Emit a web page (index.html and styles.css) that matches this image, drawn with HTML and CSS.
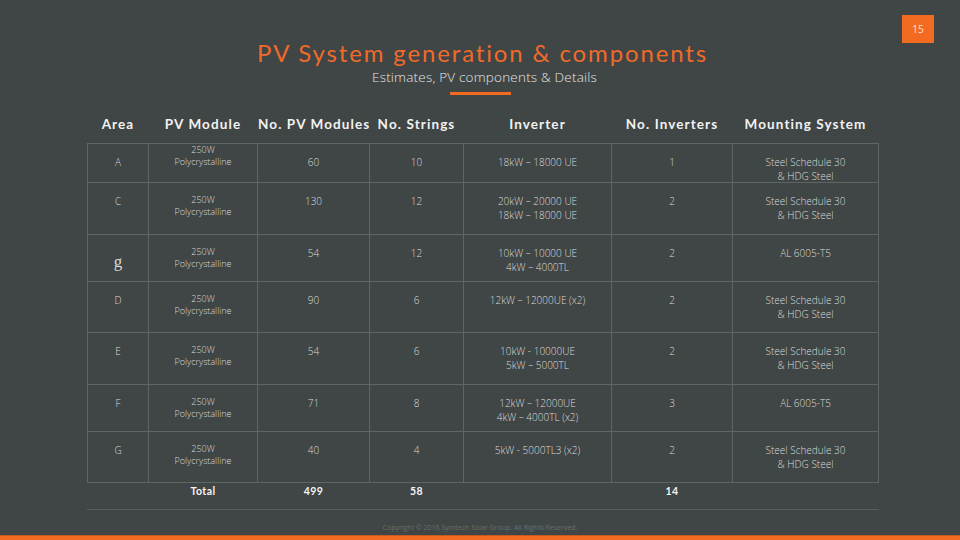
FILE: index.html
```html
<!DOCTYPE html>
<html lang="en">
<head>
<meta charset="utf-8">
<title>PV System generation &amp; components</title>
<link rel="stylesheet" href="styles.css">
</head>
<body>
<div class="slide">
  <div class="page-num">15</div>
  <h1 class="title">PV System generation &amp; components</h1>
  <p class="subtitle">Estimates, PV components &amp; Details</p>
  <div class="rule"></div>

  <div class="grid head-row">
    <div>Area</div><div>PV Module</div><div>No. PV Modules</div><div>No. Strings</div><div>Inverter</div><div>No. Inverters</div><div>Mounting System</div>
  </div>

  <div class="grid body-grid">
    <div class="cell">A</div><div class="cell module tight">250W<br>Polycrystalline</div><div class="cell">60</div><div class="cell">10</div><div class="cell">18kW – 18000 UE</div><div class="cell">1</div><div class="cell">Steel Schedule 30<br>&amp; HDG Steel</div>

    <div class="cell">C</div><div class="cell module">250W<br>Polycrystalline</div><div class="cell">130</div><div class="cell">12</div><div class="cell">20kW – 20000 UE<br>18kW – 18000 UE</div><div class="cell">2</div><div class="cell">Steel Schedule 30<br>&amp; HDG Steel</div>

    <div class="cell serif-g">g</div><div class="cell module">250W<br>Polycrystalline</div><div class="cell">54</div><div class="cell">12</div><div class="cell">10kW – 10000 UE<br>4kW – 4000TL</div><div class="cell">2</div><div class="cell">AL 6005-T5</div>

    <div class="cell">D</div><div class="cell module">250W<br>Polycrystalline</div><div class="cell">90</div><div class="cell">6</div><div class="cell">12kW – 12000UE (x2)</div><div class="cell">2</div><div class="cell">Steel Schedule 30<br>&amp; HDG Steel</div>

    <div class="cell">E</div><div class="cell module">250W<br>Polycrystalline</div><div class="cell">54</div><div class="cell">6</div><div class="cell">10kW - 10000UE<br>5kW – 5000TL</div><div class="cell">2</div><div class="cell">Steel Schedule 30<br>&amp; HDG Steel</div>

    <div class="cell">F</div><div class="cell module">250W<br>Polycrystalline</div><div class="cell">71</div><div class="cell">8</div><div class="cell">12kW – 12000UE<br>4kW – 4000TL (x2)</div><div class="cell">3</div><div class="cell">AL 6005-T5</div>

    <div class="cell">G</div><div class="cell module">250W<br>Polycrystalline</div><div class="cell">40</div><div class="cell">4</div><div class="cell">5kW - 5000TL3 (x2)</div><div class="cell">2</div><div class="cell">Steel Schedule 30<br>&amp; HDG Steel</div>
  </div>

  <div class="grid total-row">
    <div></div><div>Total</div><div>499</div><div>58</div><div></div><div>14</div><div></div>
  </div>

  <div class="footer-line"></div>
  <p class="copyright">Copyright © 2016 Symtech Solar Group. All Rights Reserved.</p>
  <div class="bottom-bar"></div>
</div>
</body>
</html>
```
FILE: styles.css
```css
html, body {
  margin: 0;
  padding: 0;
  background: #404545;
}

.slide {
  position: relative;
  width: 960px;
  height: 540px;
  overflow: hidden;
  background: #404545;
  display: flex;
  flex-direction: column;
  font-family: "Open Sans", "Liberation Sans", sans-serif;
}

.page-num {
  position: absolute;
  top: 15px;
  right: 26px;
  width: 32px;
  height: 28px;
  background: #f26b21;
  color: #fbe3d4;
  font-size: 10px;
  line-height: 28px;
  text-align: center;
}

.title {
  margin: 38px 0 0;
  padding-left: 5px;
  font-family: "Lato", "Liberation Sans", sans-serif;
  font-weight: 400;
  font-size: 24px;
  line-height: 29px;
  letter-spacing: 1.85px;
  color: #f06a2a;
  text-align: center;
}

.subtitle {
  margin: 1px 0 0;
  padding-left: 9px;
  font-weight: 300;
  font-size: 13.5px;
  line-height: 19px;
  letter-spacing: 0.2px;
  color: #e4e6e6;
  text-align: center;
}

.rule {
  align-self: center;
  width: 61px;
  height: 3px;
  margin-top: 5px;
  background: #f26b21;
}

/* shared column structure: lines at 87,148,257,369,463,611,732,878 */
.grid {
  display: grid;
  grid-template-columns: 60px 108px 111px 93px 147px 120px 145px;
  column-gap: 1px;
  width: 792px;
  box-sizing: border-box;
  padding: 0 1px;
  margin-left: 87px;
  text-align: center;
}

.head-row {
  margin-top: 15px;
  height: 33px;
  padding-top: 6px;
  font-family: "Lato", "Liberation Sans", sans-serif;
  font-weight: 700;
  font-size: 13.5px;
  line-height: 17px;
  letter-spacing: 1.1px;
  color: #f2f2f2;
  white-space: nowrap;
}

.body-grid {
  grid-template-rows: 38px 51px 46px 50px 51px 46px 50px;
  row-gap: 1px;
  padding: 1px;
  background: #5f6464;
}

.cell {
  background: #404545;
  padding-top: 12px;
  font-weight: 300;
  font-size: 10px;
  line-height: 13.7px;
  color: #d9dbdb;
}

.cell.module {
  padding-top: 11px;
  font-size: 9px;
  line-height: 12.3px;
}

.cell.module.tight {
  padding-top: 0;
}

.cell.serif-g {
  font-family: "Liberation Serif", serif;
  font-weight: 400;
  font-size: 17px;
  line-height: 20px;
  padding-top: 17px;
}

.total-row {
  height: 18px;
  padding-top: 1px;
  font-family: "Lato", "Liberation Sans", sans-serif;
  font-weight: 700;
  font-size: 10.5px;
  line-height: 14px;
  letter-spacing: 0.4px;
  color: #f4f4f4;
}

.footer-line {
  margin: 8px 0 0 87px;
  width: 792px;
  height: 1px;
  background: #575c5c;
}

.copyright {
  margin: 13px 0 0;
  font-size: 7px;
  line-height: 10px;
  color: #696e6e;
  text-align: center;
}

.bottom-bar {
  margin-top: auto;
  height: 4px;
  background: #f26b21;
  border-top: 1px solid #c95a1f;
}
```
